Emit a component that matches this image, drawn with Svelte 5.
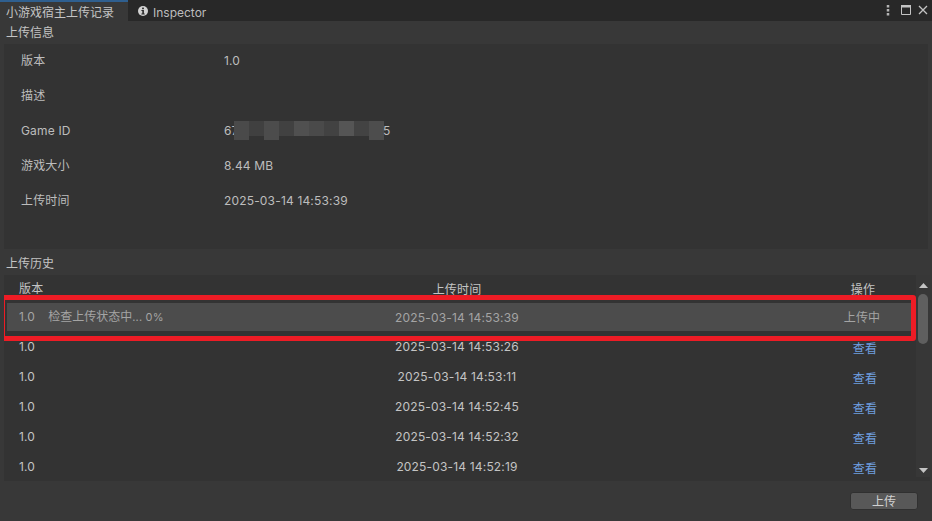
<script lang="ts">
  const info = [
    { label: '版本', value: '1.0' },
    { label: '描述', value: '' },
    { label: 'Game ID', value: '67', tail: '5' },
    { label: '游戏大小', value: '8.44 MB' },
    { label: '上传时间', value: '2025-03-14 14:53:39' },
  ];

  const history = ['14:53:26', '14:53:11', '14:52:45', '14:52:32', '14:52:19'];

  const mosaic = [
    ['#4a4a4a', 19], ['#404040', 15], ['#4c4c4c', 19], ['#414141', 15], ['#505050', 15],
    ['#4a4a4a', 15], ['#424242', 15], ['#555555', 15], ['#434343', 15], ['#4d4d4d', 19],
  ] as const;
</script>

<div class="window">
  <div class="tabbar">
    <div class="tab active">小游戏宿主上传记录</div>
    <div class="tab">
      <svg width="10" height="10" viewBox="0 0 10 10">
        <circle cx="5" cy="5" r="5" fill="#d2d2d2" />
        <rect x="4.1" y="1.6" width="1.8" height="1.6" fill="#282828" />
        <path d="M3.400 4h2.500v3.600h.8v.9H3.400v-.9h.9V4.900h-.9z" fill="#282828" />
      </svg>
      Inspector
    </div>
    <div class="controls">
      <svg class="dots" width="4" height="11" viewBox="0 0 4 11">
        <rect x="0.75" y="0" width="2.5" height="2.5" fill="#b4b4b4" />
        <rect x="0.75" y="4" width="2.5" height="2.5" fill="#b4b4b4" />
        <rect x="0.75" y="8" width="2.5" height="2.5" fill="#b4b4b4" />
      </svg>
      <svg width="10" height="10" viewBox="0 0 10 10">
        <path d="M0.500 0.500h9v9h-9z" fill="none" stroke="#c4c4c4" />
        <rect x="0" y="0" width="10" height="2.5" fill="#c4c4c4" />
      </svg>
      <svg width="10" height="10" viewBox="0 0 10 10">
        <path d="M1 1l8 8M9 1l-8 8" stroke="#c4c4c4" stroke-width="1.3" fill="none" />
      </svg>
    </div>
  </div>

  <div class="section-title">上传信息</div>
  <div class="box info">
    {#each info as row}
      <div class="info-row">
        <span class="info-label">{row.label}</span>
        <span class="info-value">{row.value}</span>
        {#if row.tail}
          <div class="mosaic">
            {#each mosaic as [color, height]}
              <span style="background: {color}; height: {height}px"></span>
            {/each}
          </div>
          <span class="info-tail">{row.tail}</span>
        {/if}
      </div>
    {/each}
  </div>

  <div class="section-title second">上传历史</div>
  <div class="box list">
    <div class="list-main">
      <div class="list-head">
        <span>版本</span>
        <span class="center down">上传时间</span>
        <span class="center op down">操作</span>
      </div>
      <div class="row current">
        <span class="ver">1.0<span class="status">检查上传状态中<span class="progress">... 0%</span></span></span>
        <span class="center">2025-03-14 14:53:39</span>
        <span class="center op">上传中</span>
      </div>
      {#each history as time}
        <div class="row">
          <span class="ver">1.0</span>
          <span class="center">2025-03-14 {time}</span>
          <a class="center op view" href="#top">查看</a>
        </div>
      {/each}
    </div>
    <div class="scrollbar">
      <svg width="9" height="5" viewBox="0 0 9 5"><path d="M4.500 0L9 5H0z" fill="#c4c4c4" /></svg>
      <div class="track"><div class="thumb"></div></div>
      <svg width="9" height="5" viewBox="0 0 9 5"><path d="M0 0h9L4.500 5z" fill="#c4c4c4" /></svg>
    </div>
    <div class="callout"></div>
  </div>

  <div class="footer">
    <button type="button">上传</button>
  </div>
</div>

<style>
  :global(body) {
    margin: 0;
    background: #383838;
  }

  .window {
    width: 932px;
    height: 521px;
    overflow: hidden;
    display: flex;
    flex-direction: column;
    background: #383838;
    color: #c4c4c4;
    font-family: Inter, "Noto Sans CJK SC", sans-serif;
    font-size: 12px;
    line-height: 15px;
    letter-spacing: 0.17px;
  }

  .tabbar {
    height: 21px;
    flex-shrink: 0;
    display: flex;
    background: #282828;
  }

  .tab {
    display: flex;
    align-items: center;
    gap: 5px;
    padding: 4px 9px 0 10px;
    color: #bdbdbd;
    letter-spacing: 0;
  }

  .tab svg {
    margin-top: -3px;
  }

  .tab.active {
    width: 128px;
    box-sizing: border-box;
    padding: 2px 0 0 6px;
    background: #383838;
    border-top: 2px solid #2f5f8f;
    color: #c4c4c4;
    white-space: nowrap;
  }

  .controls {
    margin-left: auto;
    display: flex;
    align-items: center;
    gap: 7px;
    padding: 0 4px 1px 0;
  }

  .dots {
    margin-right: 4px;
  }

  .section-title {
    height: 23px;
    flex-shrink: 0;
    box-sizing: border-box;
    padding: 4px 0 0 6px;
    color: #c4c4c4;
    letter-spacing: 0;
  }

  .section-title.second {
    height: 25px;
    margin-top: 1px;
    padding-top: 6px;
  }

  .box {
    margin: 0 4px;
    background: #333333;
    position: relative;
  }

  .info {
    height: 205px;
    box-sizing: border-box;
  }

  .info-row {
    height: 35px;
    display: flex;
    align-items: center;
    padding: 0 0 3px 17px;
    box-sizing: border-box;
    position: relative;
    color: #bdbdbd;
  }

  .info-label {
    width: 203px;
    flex-shrink: 0;
  }

  .mosaic {
    position: absolute;
    left: 230px;
    top: 7px;
    display: flex;
    align-items: flex-start;
  }

  .mosaic span {
    width: 15px;
  }

  .info-tail {
    position: absolute;
    left: 379px;
  }

  .list {
    height: 206px;
    margin-right: 2px;
    display: flex;
    overflow: hidden;
  }

  .list-main {
    flex: 1;
    min-width: 0;
    height: 206px;
    overflow: hidden;
  }

  .list-head {
    height: 20px;
    display: grid;
    grid-template-columns: 376px 124px 1fr;
    padding: 6px 0 0 15px;
  }

  .down {
    margin-top: 1px;
  }

  .center {
    text-align: center;
    white-space: nowrap;
  }

  .op {
    width: 50px;
    margin-left: 319px;
  }

  .row {
    height: 30px;
    display: grid;
    grid-template-columns: 376px 124px 1fr;
    align-items: center;
    padding-left: 15px;
    color: #c4c4c4;
  }

  .row.current {
    margin: 2px 4px 0 3px;
    height: 28px;
    padding-left: 12px;
    background: #4c4c4c;
    color: #a4a4a4;
  }

  .current .op {
    margin-left: 318px;
  }

  .ver {
    white-space: nowrap;
  }

  .status {
    margin-left: 13px;
    letter-spacing: 0;
  }

  .progress {
    font-size: 11px;
    letter-spacing: 0.2px;
  }

  .view {
    color: #6f9fe0;
    text-decoration: none;
    margin-top: 5px;
    margin-left: 321px;
  }

  .scrollbar {
    width: 14px;
    flex-shrink: 0;
    display: flex;
    flex-direction: column;
    align-items: center;
    background: #373737;
    padding: 8px 0 4px;
    height: 202px;
    box-sizing: border-box;
  }

  .track {
    flex: 1;
    width: 100%;
    padding-top: 6px;
    box-sizing: border-box;
  }

  .thumb {
    width: 10px;
    height: 50px;
    margin: 0 auto;
    border-radius: 5px;
    background: #5f5f5f;
  }

  .callout {
    position: absolute;
    left: -4px;
    top: 20px;
    width: 906px;
    height: 36px;
    border: 5px solid #ee1c25;
    border-radius: 3px;
  }

  .footer {
    flex: 1;
    display: flex;
    justify-content: flex-end;
    padding: 11px 14px 0 0;
  }

  button {
    width: 68px;
    height: 18px;
    padding: 0;
    font: inherit;
    color: #d2d2d2;
    background: #585858;
    border: 1px solid #303030;
    border-radius: 3px;
  }
</style>
